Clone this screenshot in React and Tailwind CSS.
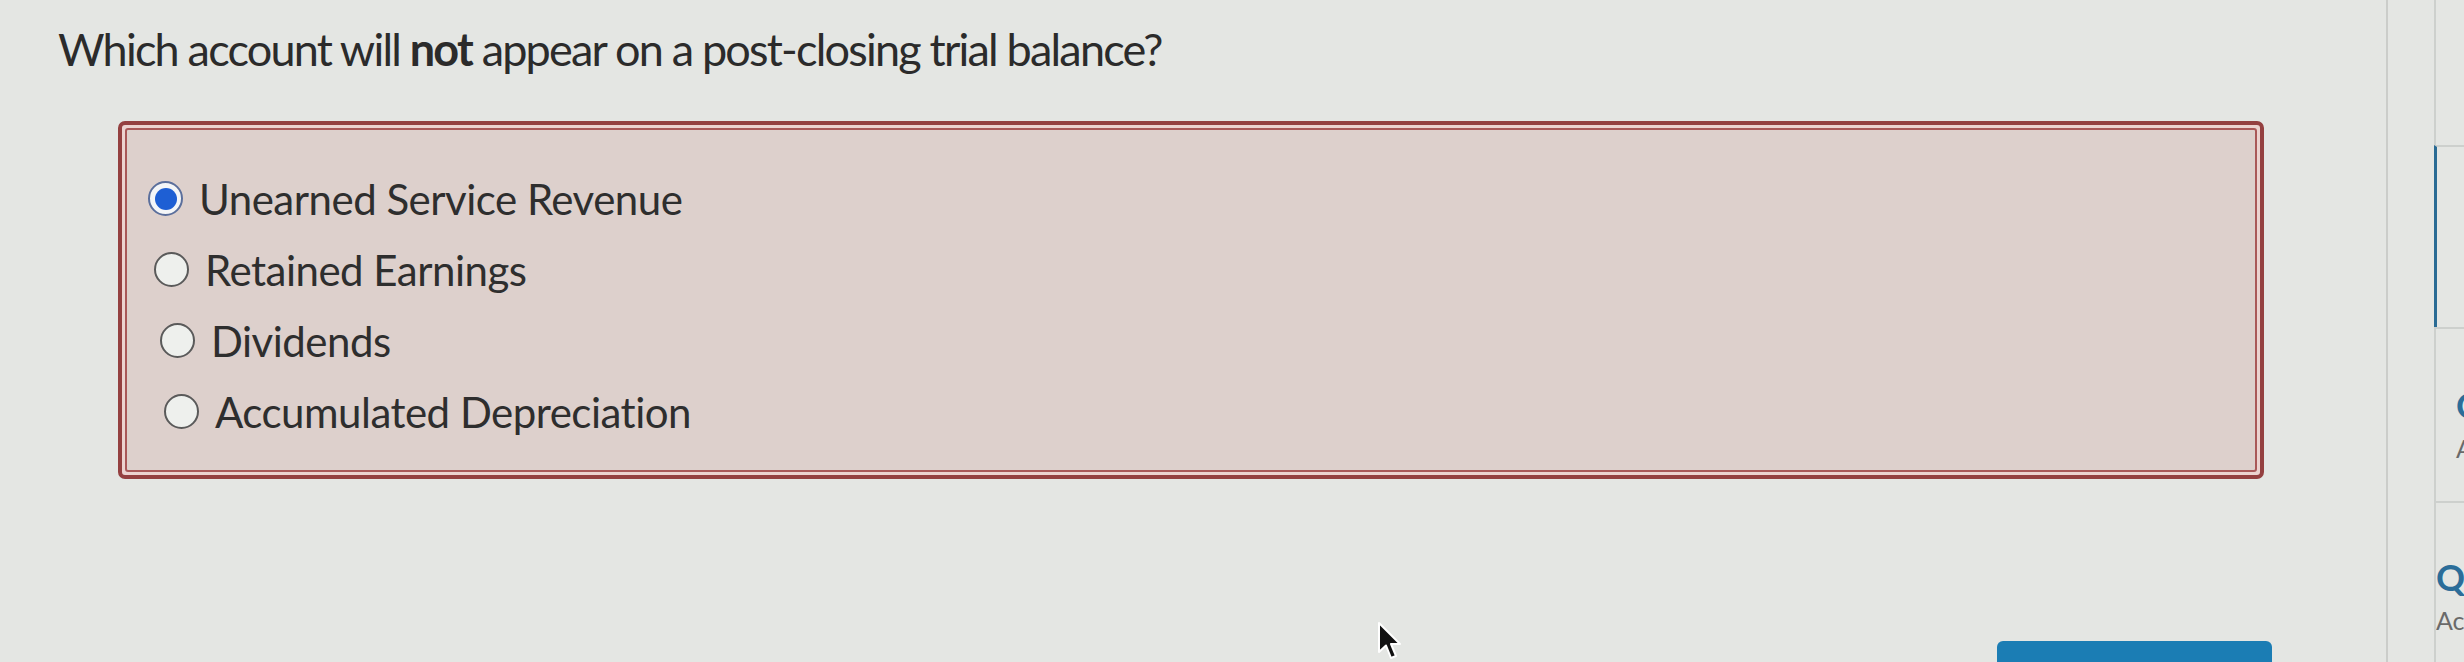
import React from "react";

function Radio({ checked }) {
  if (checked) {
    return (
      <span className="flex h-[35px] w-[35px] shrink-0 items-center justify-center rounded-full border-[2px] border-[#5b6f9c] bg-[#f4f6f8]">
        <span className="h-[22px] w-[22px] rounded-full bg-[#1e5fd4]" />
      </span>
    );
  }
  return (
    <span className="h-[35px] w-[35px] shrink-0 rounded-full border-[2.5px] border-[#5a5a5a] bg-[#eef0ed]" />
  );
}

function Option({ label, checked, indent }) {
  return (
    <div className={`flex h-[71px] shrink-0 items-center gap-[16px] ${indent}`}>
      <Radio checked={checked} />
      <span className="text-[42px] leading-none text-[#2e2e2e] tracking-[-0.5px]">{label}</span>
    </div>
  );
}

export default function App() {
  return (
    <div className="relative flex h-[662px] w-[2464px] overflow-hidden bg-[#e4e6e3] font-['Lato','Liberation_Sans',sans-serif]">
      {/* main column */}
      <div className="flex flex-1 flex-col pl-[58px]">
        <h1 className="mt-[23px] shrink-0 text-[45px] leading-[53px] font-normal text-[#2b2b2b] tracking-[-1.8px]">
          Which account will <span className="font-bold">not</span> appear on a post-closing trial balance?
        </h1>

        <div className="ml-[60px] mt-[45px] h-[358px] w-[2146px] shrink-0 rounded-[7px] border-[4px] border-[#944040] bg-[#ecd3d0] p-[3px]">
          <div className="flex h-full flex-col rounded-[3px] border-[2px] border-[#a95858] bg-[#ddd0cc] pl-[27px] pt-[33px]">
            <Option label="Unearned Service Revenue" checked indent="ml-[-6px]" />
            <Option label="Retained Earnings" indent="" />
            <Option label="Dividends" indent="ml-[6px]" />
            <Option label="Accumulated Depreciation" indent="ml-[10px]" />
          </div>
        </div>

        <div className="mt-[162px] flex shrink-0 pl-[1939px]">
          <div className="h-[40px] w-[275px] rounded-t-[6px] bg-[#1b7db4]" />
        </div>
      </div>

      {/* divider */}
      <div className="w-[2px] bg-[#cbcdca]" />

      {/* right panel */}
      <div className="flex w-[76px] flex-col pl-[46px]">
        <div className="h-[145px] shrink-0 border-l-[2px] border-[#cdd0cd]" />
        <div className="h-[182px] shrink-0 border-l-[3px] border-t-[2px] border-l-[#2a6b94] border-t-[#cdd0cd]" />
        <div className="h-[174px] shrink-0 overflow-hidden whitespace-nowrap border-l-[2px] border-t-[2px] border-[#cdd0cd] pl-[20px] pt-[56px]">
          <div className="text-[36px] leading-[40px] font-bold text-[#2b6d99]">Question 2</div>
          <div className="mt-[8px] text-[25px] leading-[30px] text-[#6a6a6a]">Attempted</div>
        </div>
        <div className="flex-1 overflow-hidden whitespace-nowrap border-l-[2px] border-t-[2px] border-[#cdd0cd] pl-[0px] pt-[54px]">
          <div className="text-[36px] leading-[40px] font-bold text-[#2b6d99]">Question 3</div>
          <div className="mt-[8px] text-[25px] leading-[30px] text-[#6a6a6a]">Accepted</div>
        </div>
      </div>

      {/* mouse cursor */}
      <svg
        className="absolute left-[1376px] top-[621px]"
        width="26"
        height="40"
        viewBox="0 0 26 40"
      >
        <path
          d="M3 2 L3 31 L10 24.5 L15 37 L20 35 L15 23 L24 23 Z"
          fill="#111"
          stroke="#fff"
          strokeWidth="2"
          strokeLinejoin="round"
        />
      </svg>
    </div>
  );
}
